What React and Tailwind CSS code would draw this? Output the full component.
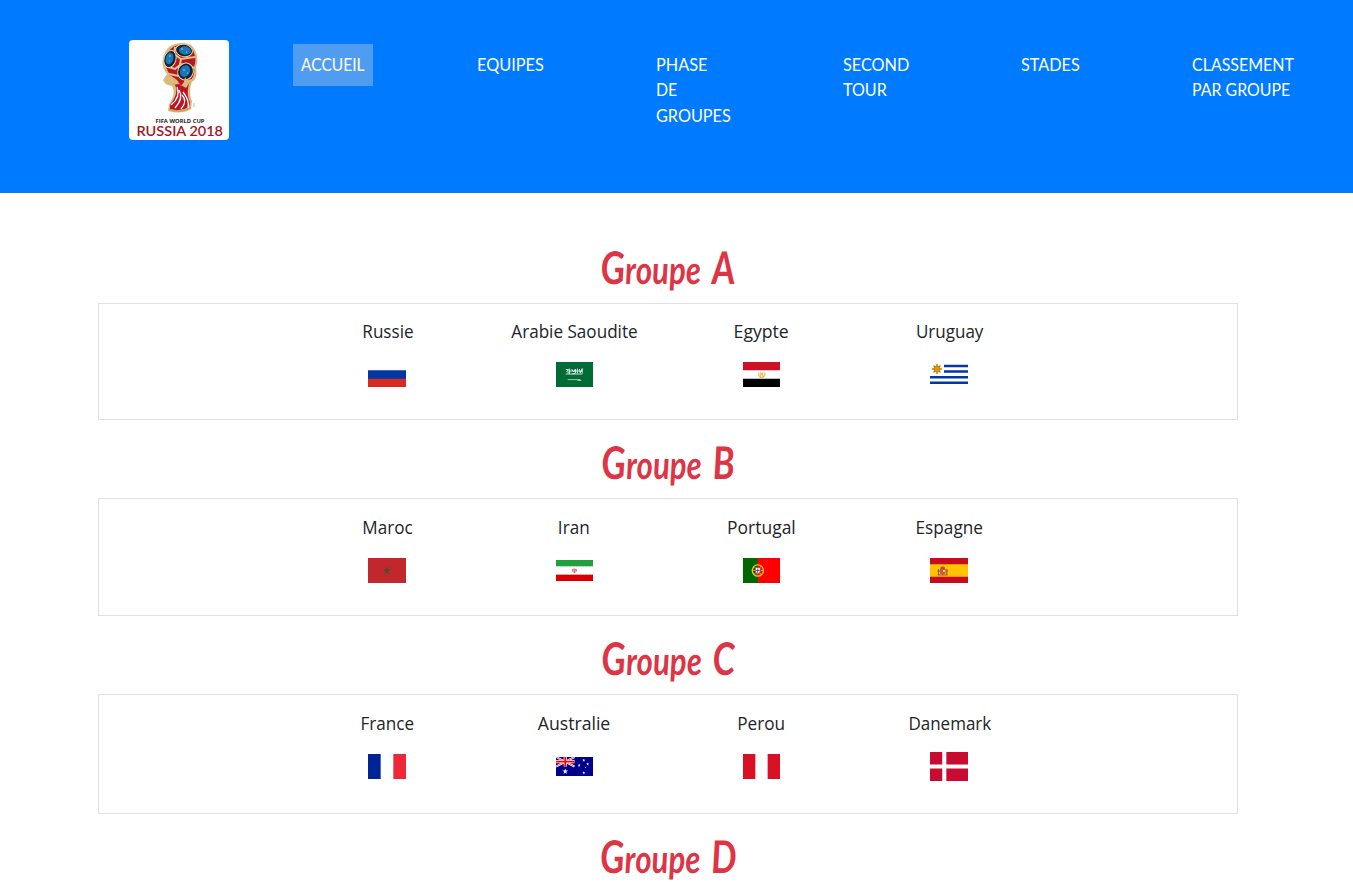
import React from "react";

function Logo() {
  return (
    <svg viewBox="0 0 100 100" className="size-[100px] shrink-0 rounded bg-[#fefefe]">
      <path d="M38 9C43 3 55 1 62 5C68 10 70 20 67 27C68 34 68 39 63 42C60 49 61 56 63 61L62 69Q52 75 39 71L40 64C45 57 46 51 43 46C38 45 36 44 34 40L38 34C32 28 32 17 38 9Z" fill="#d8bb80" />
      <path d="M40 11C44 5 54 3 61 6C66 12 68 20 65 27C66 34 64 38 61 41C58 48 58 57 61 62L60 67Q51 72 41 69V65C47 57 49 51 46 45C41 40 40 38 40 33C35 26 35 18 40 11Z" fill="#bb1425" />
      <path d="M36 26L46 29L52 24L66 28M46 7L45 14L52 19L66 17M52 19L50 29M40 34L50 36" fill="none" stroke="#e0c58b" strokeWidth="2" />
      <ellipse cx="55" cy="10.500" rx="8.500" ry="6.200" fill="#17222d" stroke="#e8d5ad" strokeWidth="1" transform="rotate(9 55 10.5)" />
      <ellipse cx="56" cy="10.500" rx="6" ry="4.200" fill="#1977b9" transform="rotate(9 56 10.5)" />
      <ellipse cx="41" cy="19" rx="6" ry="8.700" fill="#17222d" stroke="#e8d5ad" strokeWidth="1" transform="rotate(14 41 19)" />
      <ellipse cx="40.500" cy="18.500" rx="3.800" ry="6" fill="#1977b9" transform="rotate(14 40.5 18.5)" />
      <ellipse cx="56.500" cy="31.500" rx="7.700" ry="8.500" fill="#17222d" stroke="#e8d5ad" strokeWidth="1" transform="rotate(25 56.5 31.5)" />
      <ellipse cx="56" cy="31" rx="5" ry="6" fill="#1977b9" transform="rotate(25 56 31)" />
      <path d="M52 9h2M57 12h1M40 16h2M40 21h1M54 30h2M58 33h1" stroke="#8fd3f3" strokeWidth="1" />
      <path d="M35 39L41 35L48 40L52 46L55 42L56 37L58 40L63 39L59 45L57 48L50 44L43 45Z" fill="#dcbb78" />
      <path d="M48 47Q52 57 42 65M50 50Q55 58 46 68M53 55Q59 61 52 69M54 52Q61 61 59 68" fill="none" stroke="#fff" strokeWidth="1.300" />
      <path d="M40 69.500Q51 73 62 68" fill="none" stroke="#caa353" strokeWidth="1.600" />
      <path d="M65 63v4" stroke="#999" strokeWidth=".7" />
      <text x="26.500" y="82.600" textLength="49" lengthAdjust="spacingAndGlyphs" fontFamily="Open Sans, sans-serif" fontSize="5.800" fontWeight="700" fill="#241c1c">FIFA WORLD CUP</text>
      <text x="7.500" y="95.500" textLength="86.500" lengthAdjust="spacingAndGlyphs" fontFamily="Lato, sans-serif" fontSize="13.500" fontWeight="600" fill="#a31525">RUSSIA 2018</text>
    </svg>
  );
}

function Star({ x, y, r = 1 }) {
  return <path transform={`translate(${x} ${y}) scale(${r})`} d="M0-1L.25-.3L1-.3L.4.15L.6.9L0 .45L-.6.9L-.4.15L-1-.3L-.25-.3Z" fill="#fff" />;
}

const FLAGS = {
  russie: { h: 25, art: <><path fill="#fff" d="M0 0H38V8H0Z" /><path fill="#0037a4" d="M0 8.300H38V17H0Z" /><path fill="#d62c1f" d="M0 16.700H38V25H0Z" /></> },
  arabie: { h: 25, art: <><path fill="#006c35" d="M0 0H38V25H0Z" /><path d="M10 7.500h3l-2 2 3 2M14 6.500v5M16 7l2 3 2-3v4l-3 1M22 6.500v5M24 7l1 4 2-4.500v5M10 12h17M12 9h15" fill="none" stroke="#fff" strokeOpacity=".8" strokeWidth="1" /><path d="M12 17.600H25M22 18.500H26" stroke="#c4ddcf" strokeWidth=".8" /></> },
  egypte: { h: 25, art: <><path fill="#fff" d="M0 0H38V25H0Z" /><path fill="#ce1126" d="M0 0H38V8.300H0Z" /><path d="M0 16.700H38V25H0Z" /><path d="M16.300 10.500v3l2 2V11l1 1 1-1v4.500l2-2v-3M17 15.500h4" fill="none" stroke="#dfc45f" strokeWidth="1.200" /></> },
  uruguay: { h: 25, art: <><path d="M14 4H38M14 9.600H38M0 15.200H38M0 20.800H38" stroke="#0038a8" strokeWidth="2.500" /><path d="M7 2V12M2 7H12M3.500 3.500L10.500 10.500M3.500 10.500L10.500 3.500" stroke="#c89525" strokeWidth="1.500" /><circle cx="7" cy="7" r="3.200" fill="#d99a13" stroke="#98681d" strokeWidth=".6" /></> },
  maroc: { h: 25, art: <><path fill="#c1272d" d="M0 0H38V25H0Z" /><path d="M19 9.500L21 15.500L16 11.800H22L17 15.500Z" fill="#61452b" stroke="#49502e" strokeWidth=".9" /></> },
  iran: { h: 21, art: <><path fill="#fff" d="M0 0H38V21H0Z" /><path fill="#239f40" d="M0 0H38V6.500H0Z" /><path fill="#da0000" d="M0 14.500H38V21H0Z" /><path d="M0 6.500H38M0 14.300H38" stroke="#fff" strokeOpacity=".6" strokeWidth=".9" strokeDasharray="1 .5" /><path d="M19 8.500V13M17.300 8.800Q15.700 11 18 12.500M20.700 8.800Q22.300 11 20 12.500M18 9Q17 11 19 12M20 9Q21 11 19 12" fill="none" stroke="#e55555" strokeWidth=".8" /></> },
  portugal: { h: 25, art: <><path fill="#f00" d="M0 0H38V25H0Z" /><path fill="#060" d="M0 0H15.200V25H0Z" /><circle cx="15.200" cy="12.500" r="5.700" fill="none" stroke="#ded321" strokeWidth="1.300" /><path d="M9 12.500H21M11 8L19 17M19 8L11 17" stroke="#c9c31d" strokeWidth=".8" /><path d="M12 9H18.500V13Q18 16 15.200 17Q12.500 16 12 13Z" fill="#e33" /><path d="M13.200 10H17.300V13Q17 15 15.200 15.500Q13.500 15 13.200 13Z" fill="#fff" /><path d="M15.200 10.500V15M13.500 12.500H17" stroke="#3c4f9d" strokeWidth="1" /></> },
  espagne: { h: 25, art: <><path fill="#c60b1e" d="M0 0H38V25H0Z" /><path fill="#ffc400" d="M0 6.200H38V18.800H0Z" /><path d="M8.500 11V17M16.800 11V17" stroke="#a8604a" strokeWidth="1.200" /><path d="M10 11H15.500V15.500L13 17L10 15.500Z" fill="#c65c42" /><path d="M10.500 9.500Q13 7.500 15 9.500V11H10.500Z" fill="#ac4c20" /><path d="M13 12H15V14H13Z" fill="#ddbfc1" /><path d="M7.500 13H10M15.500 13H18M8 17H17.500" stroke="#ad3b21" strokeWidth=".8" /></> },
  france: { h: 25, art: <><path fill="#fff" d="M0 0H38V25H0Z" /><path fill="#002395" d="M0 0H12.670V25H0Z" /><path fill="#ed2939" d="M25.330 0H38V25H25.330Z" /></> },
  australie: { h: 19, art: <><path fill="#00008b" d="M0 0H38V19H0Z" /><path d="M0 0L19 9.500M19 0L0 9.500" stroke="#fff" strokeWidth="2" /><path d="M0 0L19 9.500M19 0L0 9.500" stroke="#f22" strokeWidth=".7" /><path d="M9.500 0V9.500M0 4.700H19" stroke="#fff" strokeWidth="3.200" /><path d="M9.500 0V9.500M0 4.700H19" stroke="#f00" strokeWidth="1.800" /><Star x={9.5} y={14.3} r={2.9} /><Star x={28.5} y={3.2} r={1.5} /><Star x={23.8} y={8.3} r={1.5} /><Star x={32.5} y={7} r={1.5} /><Star x={30.4} y={10.4} r={0.9} /><Star x={28.5} y={15.8} r={1.5} /></> },
  perou: { h: 25, art: <><path fill="#fff" d="M0 0H38V25H0Z" /><path fill="#d91023" d="M0 0H12.670V25H0ZM25.330 0H38V25H25.330Z" /></> },
  danemark: { h: 29, art: <><path fill="#c60c30" d="M0 0H38V29H0Z" /><path d="M14.300 0V29M0 14.500H38" stroke="#fff" strokeWidth="4.100" /></> },
};

function Flag({ id }) {
  const { h, art } = FLAGS[id];
  return (
    <svg width="100%" height={h} viewBox={`0 0 38 ${h}`} preserveAspectRatio="none" className="block">
      {art}
    </svg>
  );
}

const NAV = [
  { lines: [["ACCUEIL", "scale-x-[0.915]"]], box: "w-[80px] bg-[#509cf0]", col: "w-[176px]" },
  { lines: [["EQUIPES", "scale-x-[0.96]"]], box: "", col: "w-[179px]" },
  { lines: [["PHASE", "scale-x-[0.955]"], ["DE", "scale-x-[0.93]"], ["GROUPES", "scale-x-[0.955]"]], box: "", col: "w-[187px]" },
  { lines: [["SECOND", "scale-x-[0.955]"], ["TOUR", "scale-x-[0.945]"]], box: "", col: "w-[178px]" },
  { lines: [["STADES", "scale-x-[0.955]"]], box: "", col: "w-[171px]" },
  { lines: [["CLASSEMENT", "scale-x-[0.94]"], ["PAR GROUPE", "scale-x-[0.935]"]], box: "", col: "w-[169px]" },
];

const GROUPS = [
  {
    letter: "A", head: "h-[110px] pt-[54px]", card: "h-[117px] pt-[13px]",
    teams: [["Russie", "russie", "scale-x-[0.95]"], ["Arabie Saoudite", "arabie", "scale-x-[0.95]"], ["Egypte", "egypte", "scale-x-[0.98]"], ["Uruguay", "uruguay", "scale-x-[0.945]"]],
  },
  {
    letter: "B", head: "h-[78px] pt-[22px]", card: "h-[118px] pt-[14px]",
    teams: [["Maroc", "maroc", "scale-x-[0.95]"], ["Iran", "iran", "scale-x-[0.95]"], ["Portugal", "portugal", "scale-x-[0.97]"], ["Espagne", "espagne", "scale-x-[0.955]"]],
  },
  {
    letter: "C", head: "h-[78px] pt-[22px]", card: "h-[120px] pt-[14px]",
    teams: [["France", "france", "scale-x-[0.95]"], ["Australie", "australie", "scale-x-[0.98]"], ["Perou", "perou", "scale-x-[0.955]"], ["Danemark", "danemark", "scale-x-[0.945]"]],
  },
];

function Heading({ letter, className }) {
  return (
    <h2 className={`flex justify-center ${className}`}>
      <span className="block origin-center scale-x-[0.8] skew-x-[3deg] text-[39px] leading-[44px] font-bold italic whitespace-nowrap text-[#dc3545] [word-spacing:5px] font-['Lato',sans-serif]">
        <span className="text-[45px] leading-[40px]">G</span>roupe <span className="text-[45px] leading-[40px]">{letter}</span>
      </span>
    </h2>
  );
}

export default function App() {
  return (
    <div className="h-[882px] overflow-hidden bg-white text-[#212529]">
      <nav className="flex h-[193px] items-start overflow-hidden bg-[#007bff] pt-10 pl-[129px]">
        <Logo />
        <ul className="mt-1 ml-16 flex text-[17px] leading-[25.4px] text-white font-['Lato',sans-serif]">
          {NAV.map((item) => (
            <li key={item.col} className={`shrink-0 ${item.col}`}>
              <a className={`block px-2 pt-2 pb-[8.6px] ${item.box}`}>
                {item.lines.map(([line, fit]) => (
                  <span key={line} className={`block origin-left whitespace-nowrap ${fit}`}>{line}</span>
                ))}
              </a>
            </li>
          ))}
        </ul>
      </nav>
      <main className="ml-[98px] w-[1140px]">
        {GROUPS.map((g) => (
          <section key={g.letter}>
            <Heading letter={g.letter} className={g.head} />
            <div className={`grid grid-cols-[188px_187px_187px_188px] items-start border border-[#dee2e6] pl-[194px] ${g.card}`}>
              {g.teams.map(([name, id, fit], i) => (
                <div key={id} className="flex flex-col items-center">
                  <span className={`text-[18px] leading-[28px] whitespace-nowrap font-['Open_Sans',sans-serif] font-[450] ${i === 0 || i === 3 ? "pl-px" : "pr-px"} ${fit}`}>{name}</span>
                  <div className={`mt-[13px] flex h-[33px] items-center ${i === 0 || i === 3 ? "w-[38px]" : "w-[37px]"}`}>
                    <Flag id={id} />
                  </div>
                </div>
              ))}
            </div>
          </section>
        ))}
        <Heading letter="D" className="h-[68px] pt-[22px]" />
      </main>
    </div>
  );
}
